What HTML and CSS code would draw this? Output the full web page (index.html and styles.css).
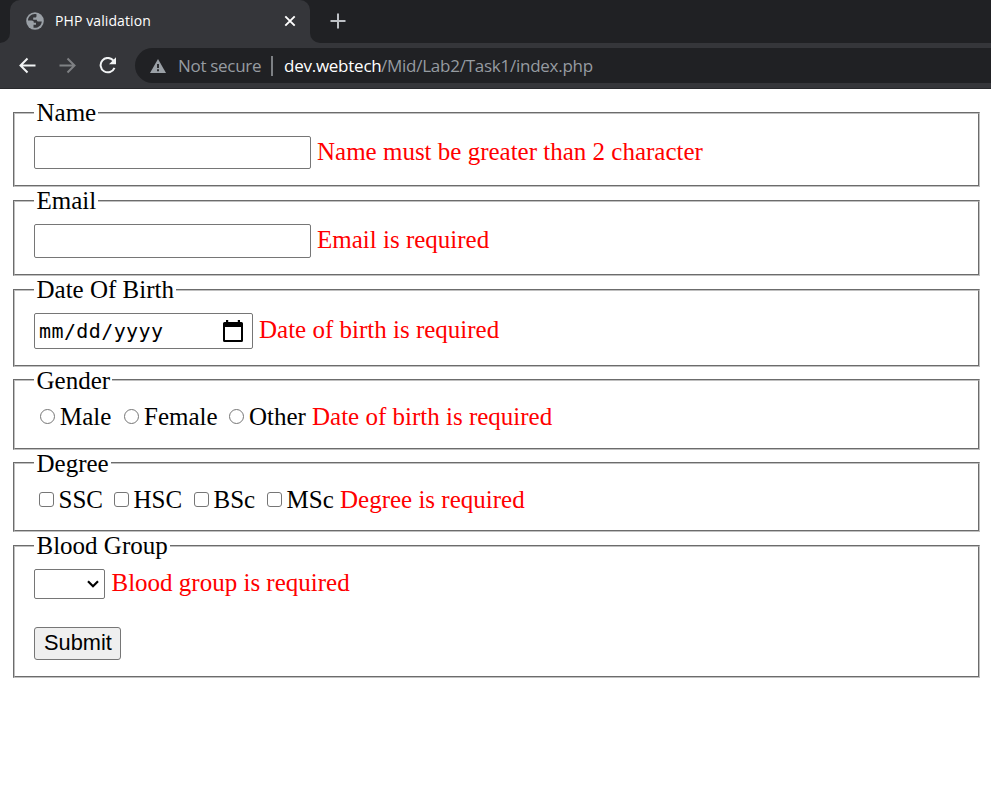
FILE: index.html
```html
<!DOCTYPE html>
<html lang="en">
<head>
<meta charset="utf-8">
<title>PHP validation</title>
<link rel="stylesheet" href="styles.css">
</head>
<body>
<header class="browser">
  <div class="tabstrip">
    <div class="edge edge-left"></div>
    <div class="tab">
      <svg class="globe" width="18" height="18" viewBox="0 0 18 18"><circle cx="9" cy="9" r="8.8" fill="#9aa0a6"/><path d="M10.500 2.200C6 1 2 4.500 2 8.500h3.500c1.800 0 2.300.8 2.300 2.200H10v2.100H7.500v2.900c4 .9 8-2 8.300-6.200h-3c-1.600 0-2-.7-2-1.800H7.200V5.500h1.900c1.100 0 1.400-.6 1.400-1.500z" fill="#35363a"/></svg>
      <span class="tab-title">PHP validation</span>
      <svg class="close" width="12" height="12" viewBox="0 0 12 12"><path d="M1.300 1.300l9.400 9.400M10.700 1.300L1.300 10.700" stroke="#fff" stroke-width="1.900"/></svg>
    </div>
    <div class="edge edge-right">
      <svg class="plus" width="16" height="16" viewBox="0 0 16 16"><path d="M8 .5v15M.5 8h15" stroke="#bdc1c5" stroke-width="2"/></svg>
    </div>
  </div>
  <div class="toolbar">
    <svg class="nav" width="18" height="18" viewBox="0 0 18 18" fill="none" stroke="#f1f3f4" stroke-width="2"><path d="M16.500 8.500H2M8.500 1.500L1.500 8.500l7 7"/></svg>
    <svg class="nav" width="18" height="18" viewBox="0 0 18 18" fill="none" stroke="#7f8184" stroke-width="2"><path d="M.500 8.500H15M8.500 1.500l7 7-7 7"/></svg>
    <svg class="nav" width="18" height="18" viewBox="0 0 18 18"><path d="M14.500 3.700A7.200 7.200 0 1 0 15.500 10.800" fill="none" stroke="#f1f3f4" stroke-width="2"/><path d="M17 .3v7h-7z" fill="#f1f3f4"/></svg>
    <div class="omnibox">
      <svg class="warn" width="16" height="14" viewBox="0 0 16 14"><path d="M8 0l8 14H0z" fill="#9aa0a6"/><path d="M8 5v4M8 10.300v1.900" stroke="#202124" stroke-width="1.800"/></svg>
      <span class="insecure">Not secure</span>
      <span class="divider"></span>
      <span class="host">dev.webtech</span><span class="path">/Mid/Lab2/Task1/index.php</span>
    </div>
  </div>
</header>
<form class="form">
  <fieldset class="name">
    <legend>Name</legend>
    <div class="row"><input class="text" type="text"><span class="error">Name must be greater than 2 character</span></div>
  </fieldset>
  <fieldset class="email">
    <legend>Email</legend>
    <div class="row"><input class="text" type="text"><span class="error">Email is required</span></div>
  </fieldset>
  <fieldset class="dob">
    <legend>Date Of Birth</legend>
    <div class="row">
      <div class="date"><span>mm/dd/yyyy</span><svg width="20" height="22" viewBox="0 0 20 22"><path d="M3 0h2.200v2h9.600V0H17v2h1.500Q20 2 20 3.500v17q0 1.500-1.500 1.500h-17Q0 22 0 20.500v-17Q0 2 1.500 2H3zM2 7v13h16V7z" fill="#000" fill-rule="evenodd"/></svg></div>
      <span class="error">Date of birth is required</span>
    </div>
  </fieldset>
  <fieldset class="gender">
    <legend>Gender</legend>
    <div class="row">
      <label class="male"><span class="radio"></span>Male</label>
      <label class="female"><span class="radio"></span>Female</label>
      <label class="other"><span class="radio"></span>Other</label>
      <span class="error">Date of birth is required</span>
    </div>
  </fieldset>
  <fieldset class="degree">
    <legend>Degree</legend>
    <div class="row">
      <label class="ssc"><span class="check"></span>SSC</label>
      <label class="hsc"><span class="check"></span>HSC</label>
      <label class="bsc"><span class="check"></span>BSc</label>
      <label class="msc"><span class="check"></span>MSc</label>
      <span class="error">Degree is required</span>
    </div>
  </fieldset>
  <fieldset class="blood">
    <legend>Blood Group</legend>
    <div class="row">
      <div class="select"><svg width="12" height="8" viewBox="0 0 12 8"><path d="M1 1.200l5 5 5-5" fill="none" stroke="#000" stroke-width="2.200"/></svg></div>
      <span class="error">Blood group is required</span>
    </div>
    <button class="submit" type="button">Submit</button>
  </fieldset>
</form>
</body>
</html>
```
FILE: styles.css
```css
* { box-sizing: border-box; }
body { margin: 0; background: #fff; color: #000; font: 25px/28px "Liberation Serif", serif; }
svg { display: block; flex: none; }

.browser { height: 89px; background: #35363a; border-bottom: 1px solid #28292c; font-family: "Open Sans", sans-serif; white-space: nowrap; }
.tabstrip { display: flex; height: 43px; }
.edge { background: #202124; }
.edge-left { width: 10px; border-bottom-right-radius: 10px; }
.edge-right { flex: 1; border-bottom-left-radius: 10px; padding: 13px 0 0 19.500px; }
.tab { width: 300px; display: flex; align-items: center; padding: 0 14px 1px 16px; position: relative; background: linear-gradient(#202124, #202124) top / 100% 12px no-repeat; }
.tab::before { content: ""; position: absolute; inset: 0; background: #35363a; border-radius: 10px 10px 0 0; }
.tab > * { position: relative; }
.tab-title { margin-left: 11px; flex: 1; color: #fff; font-size: 14px; letter-spacing: 0.1px; }
.toolbar { display: flex; align-items: center; height: 45px; padding-left: 19px; }
.nav { margin-right: 22px; }
.omnibox { flex: 1; height: 35px; margin-left: -4px; border-radius: 18px 0 0 18px; background: #202124; display: flex; align-items: center; padding-left: 15px; font-size: 17px; color: #969ba1; }
.insecure { width: 83px; margin-left: 12px; letter-spacing: -0.3px; }
.divider { width: 2px; height: 20px; margin: 0 11px 0 10px; background: #7d8084; }
.host { width: 97px; color: #fff; letter-spacing: -0.25px; }
.path { letter-spacing: -0.25px; }

.form { padding: 11px 11px 0 13px; }
fieldset { min-width: 0; margin: 0; padding: 0 19px; border: 2px groove #c0c0c0; }
legend { height: 26px; padding: 0 2px 0 2.5px; line-height: 26px; white-space: nowrap; }
.gender legend, .degree legend { line-height: 28px; }
.row { display: flex; align-items: center; white-space: nowrap; padding-top: 10px; }
.error { margin-left: 6px; color: #f00; position: relative; top: -1px; }
.name { height: 87px; margin-bottom: 1px; }
.email { height: 88px; margin-bottom: 1px; }
.dob { height: 90px; }
.gender { height: 83px; }
.degree { height: 82px; margin-bottom: 1px; }
.blood { height: 145px; }

.text { width: 277px; height: 33px; margin: 0; border: 1px solid #767676; border-radius: 2px; background: #fff; }
.email .text { height: 34px; }
.date { width: 219px; height: 36px; display: flex; align-items: center; justify-content: space-between; border: 1px solid #767676; border-radius: 2px; padding: 0 9px 0 4px; font: 20px/30px "DejaVu Sans Mono", monospace; letter-spacing: 0.4px; }
label { display: flex; align-items: center; }
.radio { width: 15px; height: 15px; margin: -2px 5px 0 6px; border: 1px solid #767676; border-radius: 50%; }
.male { width: 84px; }
.female { width: 105px; }
.other { width: 83px; }
.gender .error, .degree .error { top: 0; }
.check { width: 15px; height: 15px; margin: -2px 4.5px 0 5px; border: 1px solid #767676; border-radius: 3px; }
.ssc { width: 75px; }
.hsc { width: 80px; }
.bsc { width: 73px; }
.msc { width: 72px; }
.blood .error { margin-left: 6.5px; }
.select { width: 71px; height: 30px; border: 1px solid #767676; border-radius: 2px; display: flex; align-items: center; justify-content: flex-end; padding-right: 5px; }
.submit { display: block; width: 87px; height: 33px; margin: 28px 0 0; padding: 0 0 2px 1px; border: 1px solid #767676; border-radius: 3px; background: #efefef; color: #000; font: 21.800px/28px "Liberation Sans", sans-serif; }
```
